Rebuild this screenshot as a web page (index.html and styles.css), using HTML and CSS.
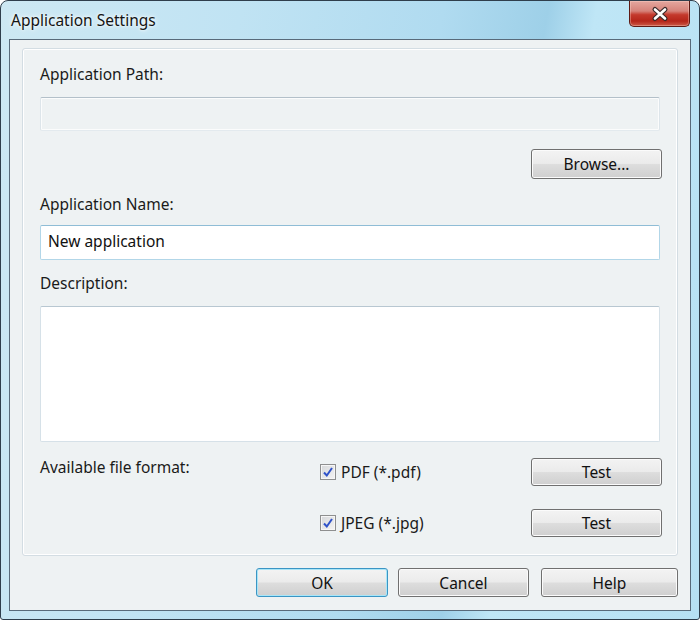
FILE: index.html
```html
<!DOCTYPE html>
<html lang="en">
<head>
    <meta charset="UTF-8">
    <title>Application Settings</title>
    <link rel="stylesheet" href="styles.css">
</head>
<body>
    <div class="window">
        <div class="titlebar">
            <div class="title">Application Settings</div>
            <button class="close" type="button" aria-label="Close">
                <svg width="20" height="18" viewBox="-10 -9 20 18">
                    <path d="M-5 -4.5 L5 4.5 M5 -4.5 L-5 4.5" stroke="#3b2a2a" stroke-width="5" stroke-linecap="round"/>
                    <path d="M-5 -4.5 L5 4.5 M5 -4.5 L-5 4.5" stroke="#ffffff" stroke-width="2.6" stroke-linecap="round"/>
                </svg>
            </button>
        </div>

        <div class="client">
            <div class="group">
                <div class="label">Application Path:</div>
                <input class="field path" type="text" disabled>

                <div class="browse-row">
                    <button class="btn browse" type="button">Browse...</button>
                </div>

                <div class="label gap">Application Name:</div>
                <input class="field name" type="text" value="New application">

                <div class="label desc-label">Description:</div>
                <textarea class="field desc"></textarea>

                <div class="formats">
                    <div class="label">Available file format:</div>
                    <label class="check">
                        <span class="box">
                            <svg width="14" height="14" viewBox="0 0 14 14"><path d="M3 7.5 L5.8 10.5 L11 3" fill="none" stroke="#2f52c9" stroke-width="2"/></svg>
                        </span>
                        PDF (*.pdf)
                    </label>
                    <button class="btn test" type="button">Test</button>

                    <div></div>
                    <label class="check">
                        <span class="box">
                            <svg width="14" height="14" viewBox="0 0 14 14"><path d="M3 7.5 L5.8 10.5 L11 3" fill="none" stroke="#2f52c9" stroke-width="2"/></svg>
                        </span>
                        JPEG (*.jpg)
                    </label>
                    <button class="btn test" type="button">Test</button>
                </div>
            </div>

            <div class="footer">
                <button class="btn default ok" type="button">OK</button>
                <button class="btn cancel" type="button">Cancel</button>
                <button class="btn help" type="button">Help</button>
            </div>
        </div>
    </div>
</body>
</html>
```

FILE: styles.css
```css
* {
    box-sizing: border-box;
}
body {
    margin: 0;
    width: 700px;
    height: 620px;
    background: #ffffff;
    font-family: "Noto Sans", "Open Sans", sans-serif;
    font-size: 15.5px;
    color: #1a1a1a;
}
.window {
    width: 700px;
    height: 620px;
    display: flex;
    flex-direction: column;
    padding: 0 8px 8px;
    border: 1px solid #2f3e4c;
    border-radius: 8px 8px 3px 3px;
    background: linear-gradient(100deg, #cde8f3 0%, #c0e3f3 30%, #b0dbf0 55%, #9ed0e8 68%, #bfe6f6 74%, #b6e0f3 100%);
}
.titlebar {
    height: 38px;
    display: flex;
    justify-content: space-between;
    align-items: flex-start;
}
.title {
    margin: 9px 0 0 2px;
    line-height: 20px;
    color: #141414;
    text-shadow: 0 0 6px #ffffff, 0 0 3px #ffffff;
}
.close {
    width: 61px;
    height: 26px;
    margin-right: 1px;
    padding: 0;
    display: flex;
    align-items: center;
    justify-content: center;
    border: 1px solid #5e1a14;
    border-top: none;
    border-radius: 0 0 5px 5px;
    background: linear-gradient(#e4a79f 0%, #d6837a 40%, #c4392c 55%, #b5261a 80%, #cc5a47 100%);
    box-shadow: inset 0 0 0 1px rgba(255, 220, 210, 0.35);
}
.client {
    flex: 1;
    display: flex;
    flex-direction: column;
    padding: 8px 12px 13px;
    border: 1px solid #586a7a;
    background: #eef2f3;
}
.group {
    display: flex;
    flex-direction: column;
    padding: 15px 17px 18px;
    border: 1px solid #d3dde3;
    border-radius: 3px;
    box-shadow: inset 0 0 0 1px #ffffff;
}
.label {
    line-height: 20px;
}
.label.gap {
    margin-top: 15px;
}
.label.desc-label {
    margin-top: 13px;
}
.field {
    font: inherit;
    color: #111111;
    border: 1px solid #c6d3dc;
    border-radius: 2px;
    outline: none;
}
.path {
    margin-top: 13px;
    height: 34px;
    background: #eef2f3;
    border-color: #b3c0c9 #dde5ea #e3eaee #dde5ea;
    box-shadow: inset 0 0 0 1px #fbfcfc;
}
.name {
    margin-top: 11px;
    height: 35px;
    padding: 0 7px 4px;
    background: #ffffff;
    border-color: #8fbdd6 #b2d6e8 #b2d6e8 #b2d6e8;
}
.desc {
    margin-top: 13px;
    height: 136px;
    resize: none;
    background: #ffffff;
    border-color: #b8c7d1 #d6e1e8 #d6e1e8 #d6e1e8;
}
.browse-row {
    display: flex;
    justify-content: flex-end;
    margin: 18px -2px 0 0;
}
.btn {
    font: inherit;
    color: #111111;
    padding: 0;
    border: 1px solid #707070;
    border-radius: 3px;
    background: linear-gradient(#f3f3f3 0%, #ebebeb 48%, #dddddd 52%, #cfcfcf 100%);
    box-shadow: inset 0 0 0 1px #fbfbfb;
}
.browse {
    width: 131px;
    height: 30px;
}
.formats {
    margin: 15px -2px 0 0;
    display: grid;
    grid-template-columns: 280px 1fr 131px;
    grid-template-rows: 29px 29px;
    row-gap: 22px;
}
.formats .label {
    align-self: start;
}
.test {
    height: 28px;
    align-self: end;
}
.check {
    display: flex;
    align-items: center;
    line-height: 20px;
    padding-top: 1px;
}
.box {
    width: 16px;
    height: 16px;
    margin-right: 5px;
    display: flex;
    align-items: center;
    justify-content: center;
    border: 1px solid #8e8f8f;
    background: linear-gradient(135deg, #d6d8da 0%, #f4f4f4 100%);
    box-shadow: inset 0 0 0 1px #f6f6f6;
}
.footer {
    margin-top: 12px;
    display: flex;
    justify-content: flex-end;
}
.footer .btn {
    height: 29px;
}
.ok {
    width: 132px;
}
.cancel {
    width: 131px;
    margin-left: 10px;
}
.help {
    width: 137px;
    margin-left: 12px;
}
.btn.default {
    border-color: #3b95c4;
    box-shadow: inset 0 0 0 1px #a8e6f8;
}
```
